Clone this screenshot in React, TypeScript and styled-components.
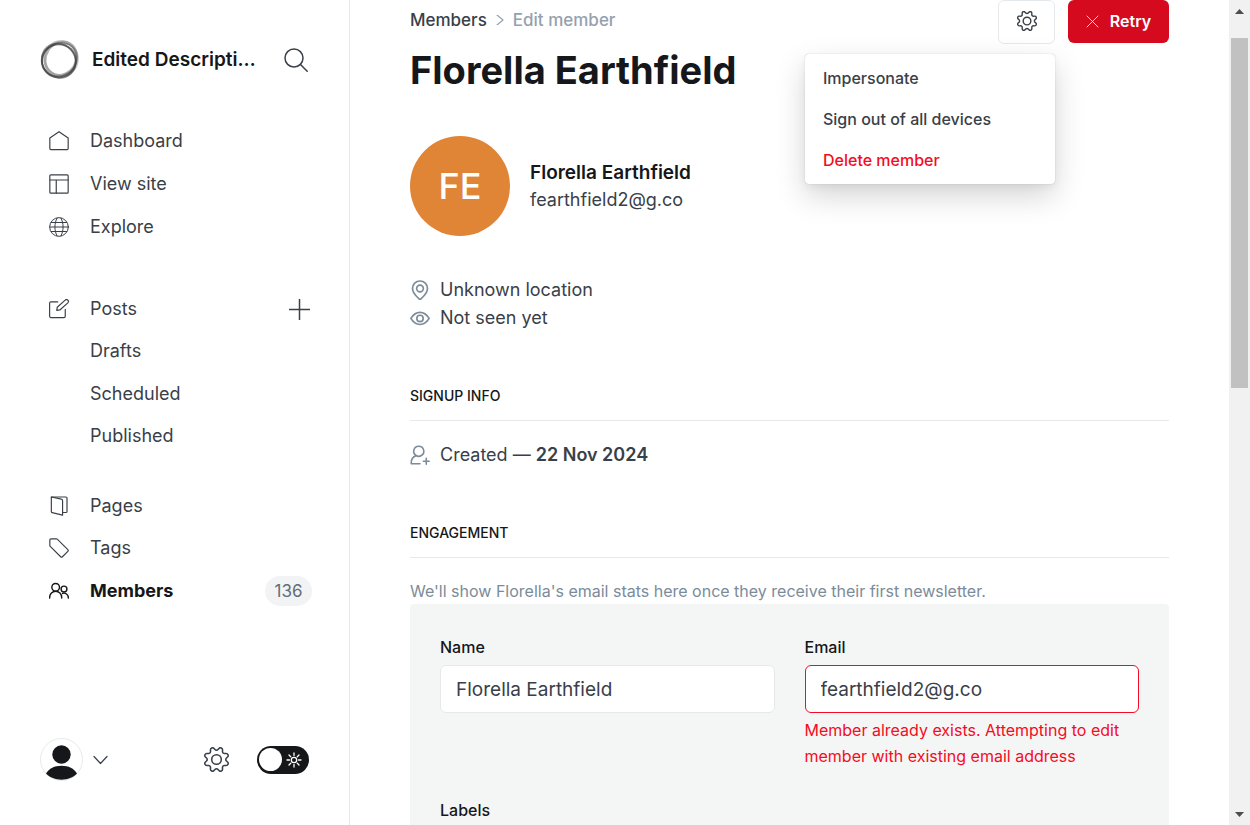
import React from 'react';
import styled, { createGlobalStyle } from 'styled-components';

const GlobalStyle = createGlobalStyle`
  *, *::before, *::after { box-sizing: border-box; }
  body {
    margin: 0;
    background: #fff;
    color: #394047;
    font-family: Inter, "Open Sans", sans-serif;
    font-size: 18px;
  }
  button, input { font: inherit; color: inherit; }
  button { border: 0; padding: 0; background: none; cursor: pointer; }
  a { color: inherit; text-decoration: none; }
  svg { display: block; flex: none; }
`;

const Shell = styled.div`
  display: flex;
  height: 100vh;
  overflow: hidden;
`;

/* Sidebar */

const Sidebar = styled.aside`
  flex: none;
  display: flex;
  flex-direction: column;
  width: 350px;
  padding: 40px 38px 44px 40px;
  border-right: 1px solid #e6e9eb;
`;

const SiteHeader = styled.header`
  display: flex;
  align-items: center;
  height: 40px;
  margin-bottom: 40px;
`;

const SiteTitle = styled.div`
  flex: 1;
  min-width: 0;
  margin: 0 20px 0 12px;
  overflow: hidden;
  color: #15171a;
  font-size: 19px;
  font-weight: 600;
  line-height: 28px;
  white-space: nowrap;
  text-overflow: ellipsis;
`;

const IconButton = styled.button`
  display: flex;
  align-items: center;
  justify-content: center;
  margin-right: 3px;
`;

const AddButton = styled(IconButton)`
  margin-right: 1px;
`;

const NavGroup = styled.ul<{ $height: number; $gap: number }>`
  display: flex;
  flex-direction: column;
  height: ${p => p.$height}px;
  margin: 0 0 ${p => p.$gap}px;
  padding: 0;
  list-style: none;
`;

const NavRow = styled.li`
  flex: 1;
  display: flex;
  align-items: center;
  justify-content: space-between;
`;

const NavLink = styled.a<{ $active?: boolean; $child?: boolean }>`
  display: flex;
  align-items: center;
  gap: 21px;
  padding-left: ${p => (p.$child ? 50 : 9)}px;
  color: ${p => (p.$active ? '#15171a' : '#394047')};
  font-weight: ${p => (p.$active ? 700 : 400)};
  line-height: 24px;
`;

const Count = styled.span`
  min-width: 47px;
  margin-right: -1px;
  border-radius: 15px;
  background: #f1f3f4;
  color: #626d79;
  font-size: 17px;
  line-height: 30px;
  text-align: center;
`;

const SidebarFooter = styled.footer`
  display: flex;
  align-items: center;
  justify-content: space-between;
  margin-top: auto;
  padding-right: 2px;
`;

const FooterGroup = styled.div<{ $gap: number }>`
  display: flex;
  align-items: center;
  gap: ${p => p.$gap}px;
`;

const AccountButton = styled.button`
  display: flex;
  align-items: center;
  gap: 10px;
`;

const Toggle = styled.label`
  display: flex;
  align-items: center;
  justify-content: space-between;
  width: 52px;
  height: 28px;
  padding: 0 7px 0 2px;
  border-radius: 14px;
  background: #15171a;
  color: #fff;
  cursor: pointer;
`;

const ToggleInput = styled.input`
  appearance: none;
  width: 23px;
  height: 23px;
  margin: 0;
  border-radius: 50%;
  background: #fff;
  cursor: pointer;
`;

/* Member page */

const Main = styled.main`
  flex: 1;
  min-width: 0;
  padding: 0 60px;
  overflow: hidden;
`;

const PageHeader = styled.header`
  display: flex;
  justify-content: space-between;
  align-items: flex-start;
  margin-bottom: 41px;
`;

const Breadcrumb = styled.nav`
  display: flex;
  align-items: center;
  gap: 8px;
  padding-top: 8px;
  font-size: 17px;
  font-weight: 500;
  line-height: 24px;
`;

const BreadcrumbCurrent = styled.span`
  color: #95a1ad;
`;

const PageTitle = styled.h1`
  margin: 13px 0 0;
  color: #15171a;
  font-size: 38px;
  font-weight: 700;
  line-height: 50px;
  white-space: nowrap;
`;

const Actions = styled.div`
  position: relative;
  display: flex;
  gap: 13px;
`;

const SettingsButton = styled.button`
  display: flex;
  align-items: center;
  justify-content: center;
  width: 57px;
  height: 44px;
  padding-bottom: 2px;
  border: 1px solid #e6e9eb;
  border-radius: 6px;
  background: #fff;
`;

const RetryButton = styled.button`
  display: flex;
  align-items: center;
  justify-content: center;
  gap: 11px;
  width: 101px;
  height: 43px;
  padding-bottom: 1px;
  border-radius: 6px;
  background: #d50a1e;
  color: #fff;
  font-size: 16px;
  font-weight: 600;
`;

const Menu = styled.ul`
  position: absolute;
  top: 54px;
  right: 114px;
  display: grid;
  gap: 1px;
  width: 250px;
  margin: 0;
  padding: 4px 0;
  border-radius: 4px;
  background: #fff;
  box-shadow: 0 0 1px rgba(0, 0, 0, 0.3), 0 3px 8px rgba(0, 0, 0, 0.05), 0 12px 30px rgba(0, 0, 0, 0.17);
  list-style: none;
`;

const MenuItem = styled.li`
  display: flex;
`;

const MenuButton = styled.button<{ $danger?: boolean }>`
  width: 100%;
  padding: 8px 18px;
  color: ${p => (p.$danger ? '#f50b23' : '#394047')};
  font-size: 16px;
  font-weight: 500;
  line-height: 24px;
  text-align: left;
`;

const Profile = styled.section`
  display: flex;
  align-items: center;
  gap: 20px;
  margin-bottom: 40px;
`;

const Initials = styled.div`
  display: flex;
  align-items: center;
  justify-content: center;
  width: 100px;
  height: 100px;
  border-radius: 50%;
  background: #e08436;
  color: #fff;
  font-size: 36px;
  font-weight: 500;
`;

const ProfileName = styled.h2`
  margin: 0;
  color: #15171a;
  font-size: 19px;
  font-weight: 600;
  line-height: 28px;
`;

const ProfileEmail = styled.p`
  margin: 0;
  line-height: 26px;
`;

const DetailList = styled.div`
  margin-bottom: 48px;
`;

const Detail = styled.p`
  display: flex;
  align-items: center;
  gap: 10px;
  margin: 0;
  line-height: 28px;

  svg { color: #7c8b9a; }
`;

const SectionTitle = styled.h3`
  margin: 0 0 20px;
  padding: 4px 0 12px;
  border-bottom: 1px solid #e6e9eb;
  color: #15171a;
  font-size: 14px;
  font-weight: 500;
  line-height: 24px;
  text-transform: uppercase;
`;

const Hint = styled.p`
  margin: 0;
  color: #7c8b9a;
  font-size: 16px;
  line-height: 26px;
`;

const Form = styled.form`
  display: grid;
  grid-template-columns: 1fr 1fr;
  gap: 28px 30px;
  padding: 30px;
  border-radius: 4px;
  background: #f4f6f6;
`;

const Field = styled.div`
  display: flex;
  flex-direction: column;
`;

const FieldLabel = styled.label`
  margin-bottom: 5px;
  color: #15171a;
  font-size: 16px;
  font-weight: 500;
  line-height: 26px;
`;

const TextInput = styled.input<{ $invalid?: boolean }>`
  width: 100%;
  height: 48px;
  padding: 0 15px;
  border: 1px solid ${p => (p.$invalid ? '#f50b23' : '#e6e9eb')};
  border-radius: 6px;
  background: #fff;
  font-size: 19px;
`;

const FieldError = styled.p`
  margin: 4px 0 0;
  color: #f50b23;
  font-size: 16px;
  line-height: 26px;
`;

const CreatedDate = styled.strong`
  font-weight: 600;
`;

/* Page scroll track */

const ScrollTrack = styled.div`
  flex: none;
  display: flex;
  flex-direction: column;
  justify-content: space-between;
  align-items: center;
  width: 21px;
  padding: 9px 0 8px;
  background: #f1f1f1;
  color: #4d4d4d;
`;

const ScrollThumb = styled.div`
  width: 17px;
  height: 350px;
  margin: 24px 0 auto;
  background: #c1c1c1;
`;

/* Icons */

const Icon = ({ size = 20, stroke = 1.4, box = 24, children }: {
  size?: number; stroke?: number; box?: number; children: React.ReactNode;
}) => (
  <svg width={size} height={size} viewBox={`0 0 ${box} ${box}`} fill="none" stroke="currentColor"
    strokeWidth={stroke} strokeLinecap="round" strokeLinejoin="round" aria-hidden="true">
    {children}
  </svg>
);

const Gear = ({ size, stroke }: { size: number; stroke: number }) => (
  <Icon size={size} stroke={stroke}>
    <path d="M10.546 2.438a1.957 1.957 0 0 0 2.908 0L14.4 1.4a1.959 1.959 0 0 1 3.41 1.413l-.071 1.4a1.958 1.958 0 0 0 2.051 2.053l1.4-.071A1.959 1.959 0 0 1 22.6 9.6l-1.042.94a1.96 1.96 0 0 0 0 2.909l1.042.94a1.959 1.959 0 0 1-1.413 3.41l-1.4-.071a1.958 1.958 0 0 0-2.056 2.056l.071 1.4A1.959 1.959 0 0 1 14.4 22.6l-.941-1.041a1.959 1.959 0 0 0-2.908 0L9.606 22.6A1.959 1.959 0 0 1 6.2 21.192l.072-1.4a1.958 1.958 0 0 0-2.056-2.056l-1.4.071A1.958 1.958 0 0 1 1.4 14.4l1.041-.94a1.96 1.96 0 0 0 0-2.909L1.4 9.606A1.958 1.958 0 0 1 2.81 6.2l1.4.071a1.958 1.958 0 0 0 2.054-2.06l-.072-1.401A1.959 1.959 0 0 1 9.606 1.4Z" />
    <circle cx="12" cy="12" r="4.6" />
  </Icon>
);

const HouseIcon = () => (
  <Icon><path d="M1 8.5v12.5a1.3 1.3 0 0 0 1.3 1.300h19.400a1.300 1.300 0 0 0 1.300-1.300V8.500L12 .8Z" /></Icon>
);
const LayoutIcon = () => (
  <Icon><rect x="1" y="1" width="22" height="22" rx="1.2" /><path d="M1 7.2h22M8.7 7.2V23" /></Icon>
);
const GlobeIcon = () => (
  <Icon stroke={1.2}>
    <circle cx="12" cy="12" r="11.2" />
    <path d="M1 12h22M2.6 6.6h18.8M2.6 17.4h18.8M9.6 1.3C6.2 8 6.2 16 9.6 22.700M14.400 1.300C17.800 8 17.800 16 14.400 22.700" />
  </Icon>
);
const WriteIcon = () => (
  <Icon>
    <path d="m13.045 13.136-3.712.531.530-3.713 9.546-8.546a2.250 2.250 0 0 1 3.182 3.182Z" />
    <path d="M19.500 12.500v8.250a1.500 1.500 0 0 1-1.500 1.500H2.250a1.500 1.500 0 0 1-1.500-1.500V5a1.500 1.500 0 0 1 1.500-1.500h8.250" />
  </Icon>
);
const PagesIcon = () => (
  <Icon>
    <path d="M2.8 1.2 14.800 3.800a1.800 1.800 0 0 1 1.500 1.800v17.400L3.800 20a1.300 1.300 0 0 1-1-1.300Z" />
    <path d="M2.800 1.200h17.500a1.300 1.300 0 0 1 1.300 1.300v16a1.300 1.300 0 0 1-1.300 1.300h-4" />
  </Icon>
);
const TagIcon = () => (
  <Icon><path d="M1 2.500A1.500 1.500 0 0 1 2.500 1h6.300a1.500 1.500 0 0 1 1.100.4l12.700 12.500a1.500 1.500 0 0 1 0 2.100l-6.500 6.500a1.500 1.500 0 0 1-2.100 0L1.500 10.100A1.500 1.500 0 0 1 1 9Z" /></Icon>
);
const MembersIcon = () => (
  <Icon stroke={1.7}>
    <circle cx="8" cy="7.600" r="4.600" />
    <path d="M.8 20.500v-1a7.200 7.200 0 0 1 14.400 0v1" />
    <circle cx="18" cy="9.600" r="3.500" />
    <path d="M16.300 14.900a5.200 5.200 0 0 1 6.900 4.900v.7" />
  </Icon>
);

const SiteLogo = () => (
  <svg width="40" height="40" viewBox="0 0 40 40" fill="none" aria-hidden="true">
    <ellipse cx="21" cy="18.500" rx="17.200" ry="15.200" stroke="#777" strokeOpacity=".55" strokeWidth="2.600" transform="rotate(-58 21 18.500)" />
    <ellipse cx="21" cy="18.800" rx="16.500" ry="17.200" stroke="#999" strokeOpacity=".6" strokeWidth="2.600" />
    <ellipse cx="19.500" cy="19.500" rx="18" ry="16" stroke="#555" strokeOpacity=".6" strokeWidth="1.600" transform="rotate(-35 19.500 19.500)" />
    <ellipse cx="18.800" cy="20.800" rx="17" ry="16.600" stroke="#333" strokeOpacity=".7" strokeWidth="2" />
    <ellipse cx="19.500" cy="21" rx="18" ry="16.200" stroke="#444" strokeOpacity=".5" strokeWidth="1.400" transform="rotate(50 19.500 20)" />
  </svg>
);

const Avatar = () => (
  <svg width="43" height="43" viewBox="0 0 43 43" aria-hidden="true">
    <circle cx="21.500" cy="21.500" r="21" fill="#fff" stroke="#e6e9eb" />
    <circle cx="21.500" cy="16.500" r="9.200" fill="#15171a" />
    <path d="M6 35.500C9 30.500 14.500 27.800 21.500 27.800S34 30.500 37 35.500C33 39.500 28 41.700 21.500 41.700S10 39.500 6 35.500Z" fill="#15171a" />
  </svg>
);

const contentLinks = [
  { label: 'Dashboard', icon: <HouseIcon /> },
  { label: 'View site', icon: <LayoutIcon /> },
  { label: 'Explore', icon: <GlobeIcon /> },
];

export default function App() {
  return (
    <>
      <GlobalStyle />
      <Shell>
        <Sidebar>
          <SiteHeader>
            <SiteLogo />
            <SiteTitle>Edited Descripti…</SiteTitle>
            <IconButton aria-label="Search">
              <Icon size={24} stroke={1.5}><circle cx="10" cy="10" r="9" /><path d="m16.500 16.500 6.700 6.700" /></Icon>
            </IconButton>
          </SiteHeader>

          <nav>
            <NavGroup $height={128} $gap={40}>
              {contentLinks.map(link => (
                <NavRow key={link.label}>
                  <NavLink href="#">{link.icon}{link.label}</NavLink>
                </NavRow>
              ))}
            </NavGroup>
            <NavGroup $height={169} $gap={28}>
              <NavRow>
                <NavLink href="#"><WriteIcon />Posts</NavLink>
                <AddButton aria-label="New post">
                  <Icon size={21} stroke={1.5} box={21}><path d="M0 10.500h21M10.500 0v21" /></Icon>
                </AddButton>
              </NavRow>
              {['Drafts', 'Scheduled', 'Published'].map(label => (
                <NavRow key={label}><NavLink href="#" $child>{label}</NavLink></NavRow>
              ))}
            </NavGroup>
            <NavGroup $height={127} $gap={0}>
              <NavRow><NavLink href="#"><PagesIcon />Pages</NavLink></NavRow>
              <NavRow><NavLink href="#"><TagIcon />Tags</NavLink></NavRow>
              <NavRow>
                <NavLink href="#" $active aria-current="page"><MembersIcon />Members</NavLink>
                <Count>136</Count>
              </NavRow>
            </NavGroup>
          </nav>

          <SidebarFooter>
            <AccountButton aria-label="Account">
              <Avatar />
              <Icon size={15} stroke={1.2} box={15}><path d="m1 4.500 6.500 7 6.500-7" /></Icon>
            </AccountButton>
            <FooterGroup $gap={28}>
              <button aria-label="Settings"><Gear size={25} stroke={1.5} /></button>
              <Toggle>
                <ToggleInput type="checkbox" role="switch" aria-label="Night shift" />
                <Icon size={16} stroke={1.3} box={16}>
                  <circle cx="8" cy="8" r="2.700" />
                  <path d="M8 1v2.500M8 12.500V15M1 8h2.500M12.500 8H15M3 3l1.700 1.700M11.300 11.300 13 13M3 13l1.700-1.700M11.300 4.700 13 3" />
                </Icon>
              </Toggle>
            </FooterGroup>
          </SidebarFooter>
        </Sidebar>

        <Main>
          <PageHeader>
            <div>
              <Breadcrumb aria-label="Breadcrumb">
                <a href="#">Members</a>
                <Icon size={10} stroke={1.2} box={10}><path d="m2 0 6 5-6 5" stroke="#95a1ad" /></Icon>
                <BreadcrumbCurrent>Edit member</BreadcrumbCurrent>
              </Breadcrumb>
              <PageTitle>Florella Earthfield</PageTitle>
            </div>
            <Actions>
              <SettingsButton aria-label="Member actions"><Gear size={20} stroke={1.7} /></SettingsButton>
              <RetryButton>
                <Icon size={13} stroke={1} box={13}><path d="m1 1 11 11M12 1 1 12" strokeOpacity=".8" /></Icon>
                Retry
              </RetryButton>
              <Menu>
                <MenuItem><MenuButton>Impersonate</MenuButton></MenuItem>
                <MenuItem><MenuButton>Sign out of all devices</MenuButton></MenuItem>
                <MenuItem><MenuButton $danger>Delete member</MenuButton></MenuItem>
              </Menu>
            </Actions>
          </PageHeader>

          <Profile>
            <Initials>FE</Initials>
            <div>
              <ProfileName>Florella Earthfield</ProfileName>
              <ProfileEmail>fearthfield2@g.co</ProfileEmail>
            </div>
          </Profile>

          <DetailList>
            <Detail>
              <Icon size={20} stroke={2}>
                <path d="M12 1.200a9 9 0 0 1 9 9c0 4.300-5.500 10.300-7.900 12.500a1.600 1.600 0 0 1-2.200 0C8.500 20.500 3 14.500 3 10.200a9 9 0 0 1 9-9Z" />
                <circle cx="12" cy="10.200" r="4" />
              </Icon>
              Unknown location
            </Detail>
            <Detail>
              <Icon size={20} stroke={2}>
                <path d="M1 12.500c2.500-4 6.500-7.300 11-7.300s8.500 3.300 11 7.300c-2.500 4-6.500 7.300-11 7.300S3.500 16.500 1 12.500Z" />
                <circle cx="12" cy="12.500" r="3.800" />
              </Icon>
              Not seen yet
            </Detail>
          </DetailList>

          <SectionTitle>Signup info</SectionTitle>
          <DetailList>
            <Detail>
              <Icon size={20} stroke={1.9}>
                <path d="M10.500 1.500a6 6 0 0 1 3.200 11.100 6 6 0 0 1-6.400 0A6 6 0 0 1 10.500 1.500ZM7.300 12.800C3.500 14 1.500 17.500 1.500 21v1.500h10.500M19.500 16v7M16 19.500h7" />
              </Icon>
              <span>Created — <CreatedDate>22 Nov 2024</CreatedDate></span>
            </Detail>
          </DetailList>

          <SectionTitle>Engagement</SectionTitle>
          <Hint>We'll show Florella's email stats here once they receive their first newsletter.</Hint>

          <Form>
            <Field>
              <FieldLabel htmlFor="member-name">Name</FieldLabel>
              <TextInput id="member-name" defaultValue="Florella Earthfield" />
            </Field>
            <Field>
              <FieldLabel htmlFor="member-email">Email</FieldLabel>
              <TextInput id="member-email" type="email" defaultValue="fearthfield2@g.co" $invalid
                aria-invalid="true" aria-describedby="member-email-error" />
              <FieldError id="member-email-error">
                Member already exists. Attempting to edit member with existing email address
              </FieldError>
            </Field>
            <Field>
              <FieldLabel htmlFor="member-labels">Labels</FieldLabel>
              <TextInput id="member-labels" />
            </Field>
          </Form>
        </Main>

        <ScrollTrack aria-hidden="true">
          <svg width="9" height="5" viewBox="0 0 9 5" fill="currentColor"><path d="M0 5 4.500 0 9 5Z" /></svg>
          <ScrollThumb />
          <svg width="9" height="5" viewBox="0 0 9 5" fill="currentColor"><path d="M0 0 4.500 5 9 0Z" /></svg>
        </ScrollTrack>
      </Shell>
    </>
  );
}
